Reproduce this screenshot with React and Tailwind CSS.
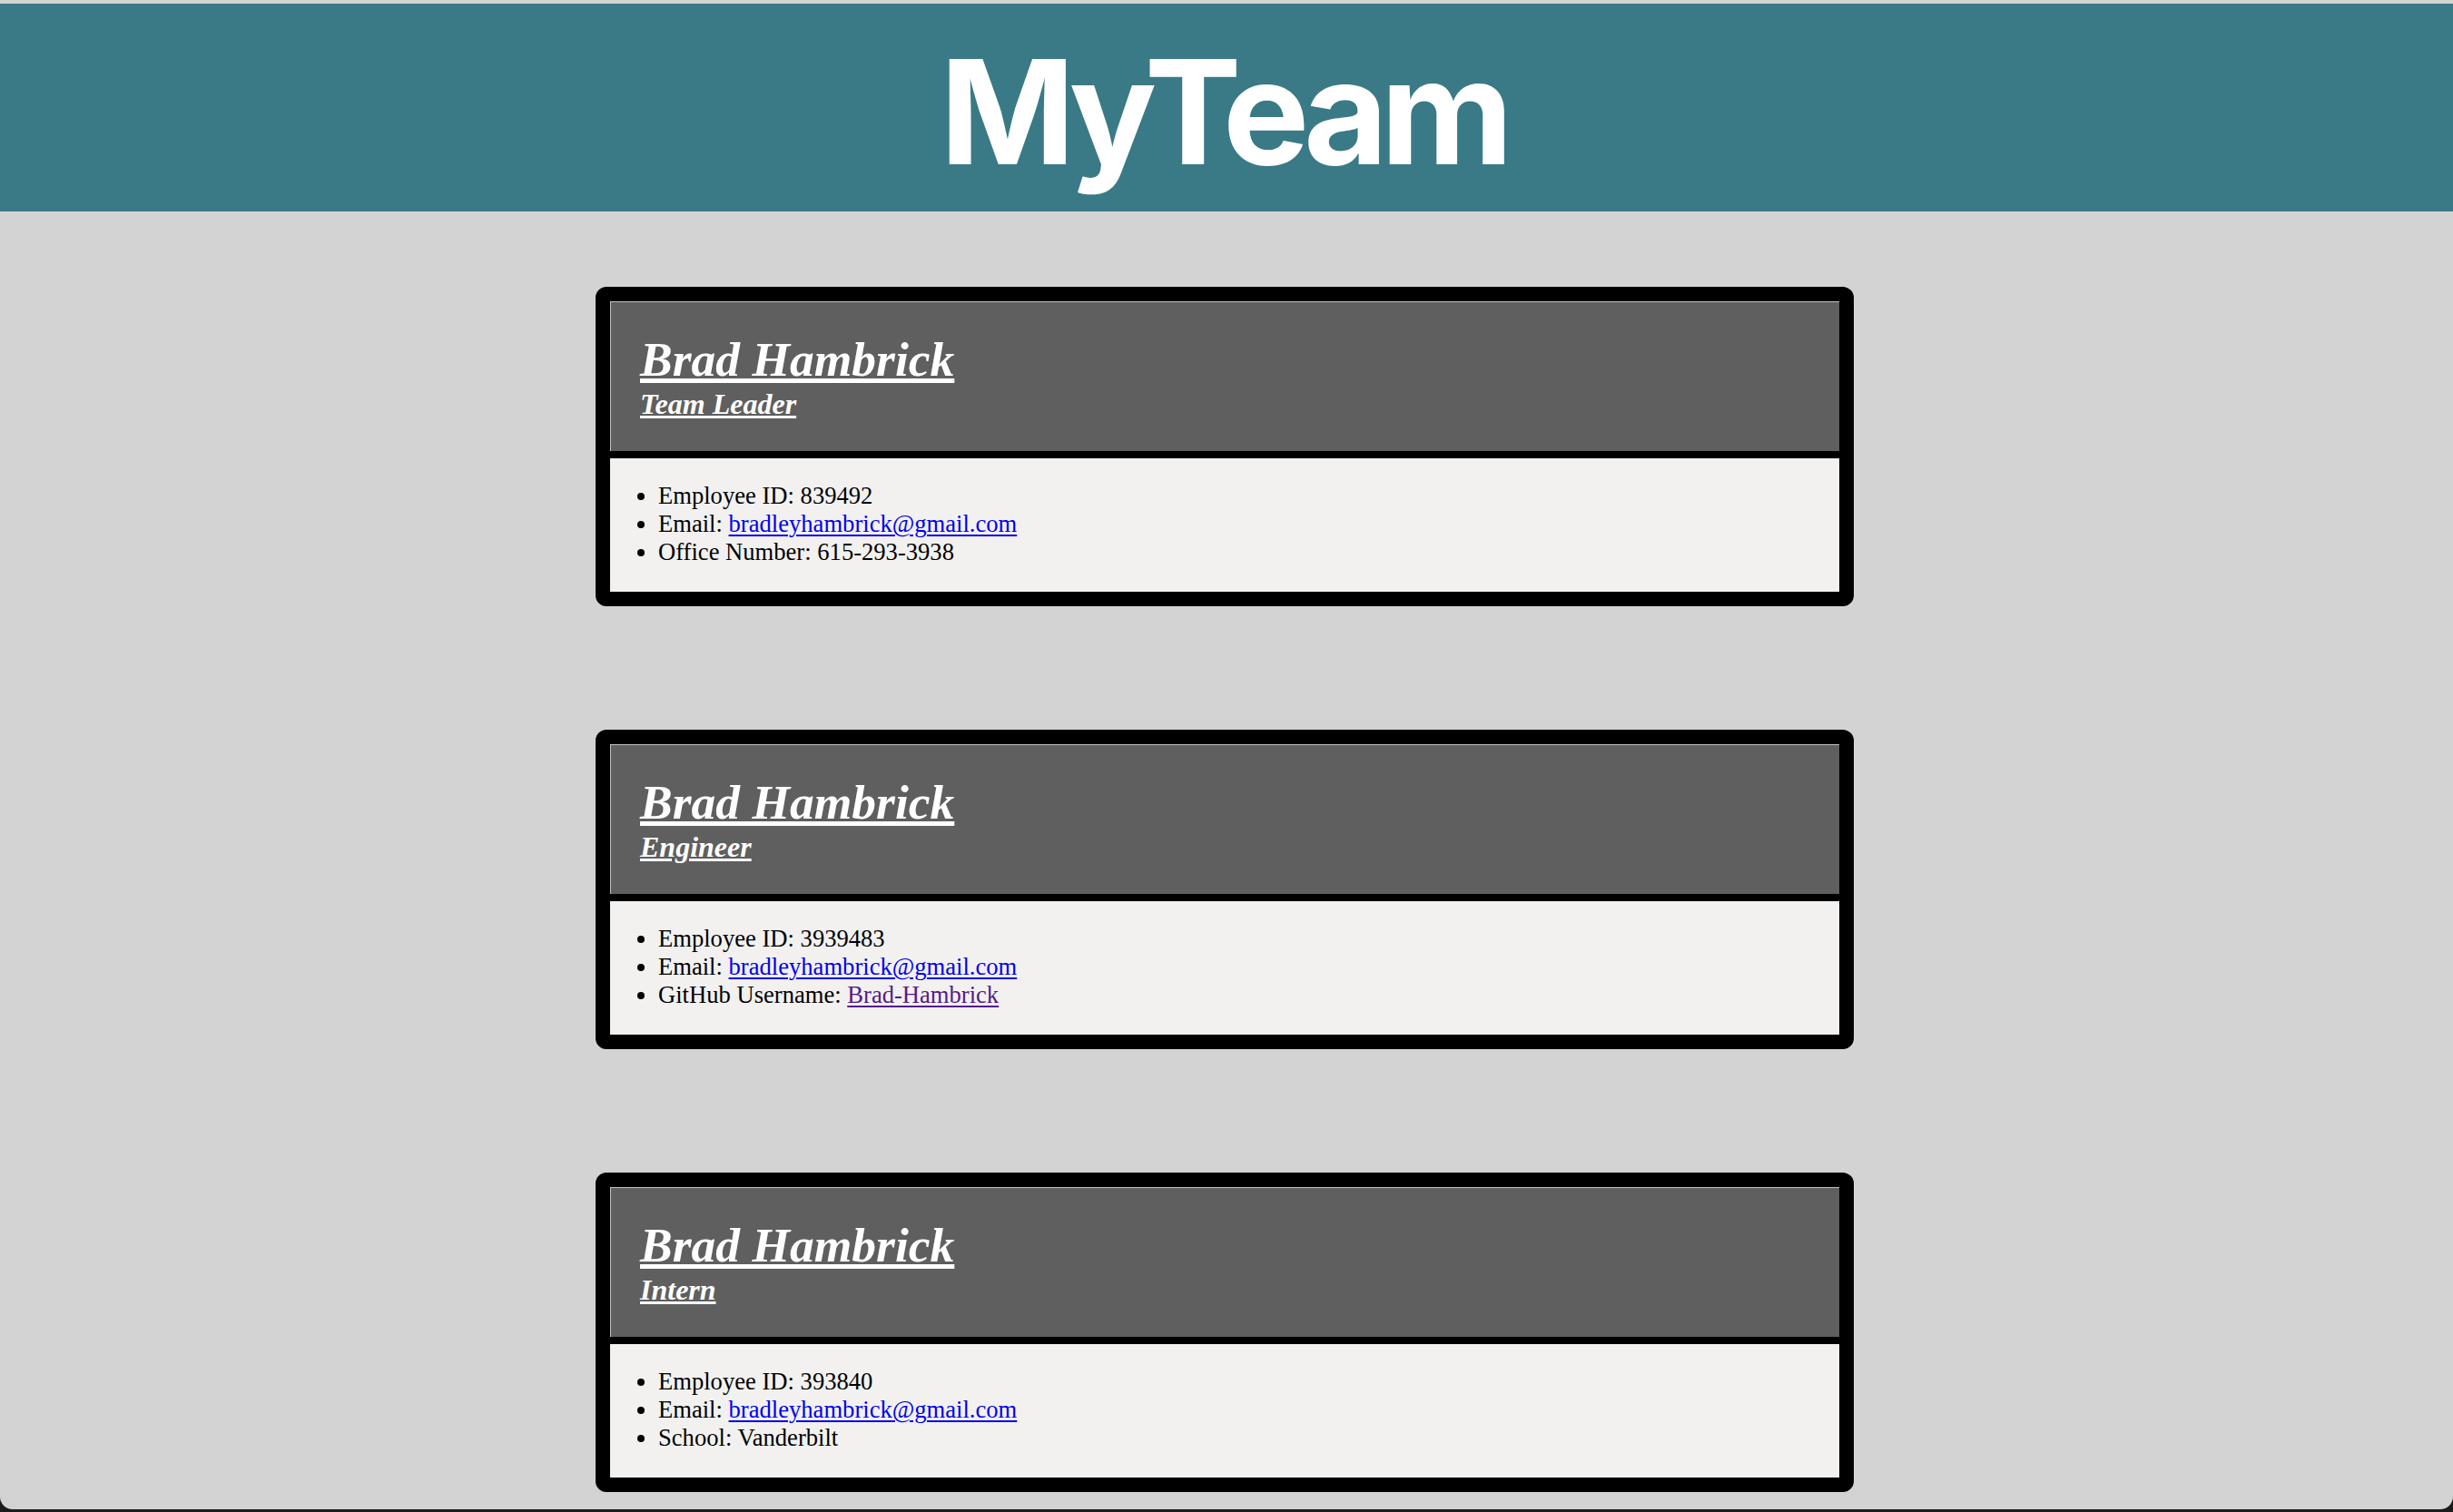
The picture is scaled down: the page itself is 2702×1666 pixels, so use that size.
import React from "react";

const team = [
  {
    name: "Brad Hambrick",
    role: "Team Leader",
    id: "839492",
    email: "bradleyhambrick@gmail.com",
    extra: { label: "Office Number", value: "615-293-3938" },
  },
  {
    name: "Brad Hambrick",
    role: "Engineer",
    id: "3939483",
    email: "bradleyhambrick@gmail.com",
    extra: { label: "GitHub Username", value: "Brad-Hambrick", link: true },
  },
  {
    name: "Brad Hambrick",
    role: "Intern",
    id: "393840",
    email: "bradleyhambrick@gmail.com",
    extra: { label: "School", value: "Vanderbilt" },
  },
];

const EmployeeCard = ({ person }) => (
  <div className="w-[1386px] border-[16px] border-black rounded-[12px] bg-black">
    {/* card header */}
    <div className="bg-[#5f5f5f] border-t border-l border-[#c2c2c2] pl-[32px] pt-[32px] pb-[33px] text-white italic font-bold underline">
      <h2 className="text-[53.5px] leading-[62px] decoration-[4px] underline-offset-[6px]">
        {person.name}
      </h2>
      <h3 className="text-[32px] leading-[37px] decoration-[3px] underline-offset-[4px]">
        {person.role}
      </h3>
    </div>
    <div className="h-[8px] bg-black" />
    {/* card body */}
    <div className="bg-[#f2f1f0] pt-[26px] pb-[28px]">
      <ul className="list-disc pl-[53px] text-[26.6px] leading-[31px] text-black">
        <li>Employee ID: {person.id}</li>
        <li>
          Email:{" "}
          <a href="#" className="text-[#0000ee] underline decoration-[2px] underline-offset-[3px]">
            {person.email}
          </a>
        </li>
        <li>
          {person.extra.label}:{" "}
          {person.extra.link ? (
            <a href="#" className="text-[#551a8b] underline decoration-[2px] underline-offset-[3px]">
              {person.extra.value}
            </a>
          ) : (
            person.extra.value
          )}
        </li>
      </ul>
    </div>
  </div>
);

export default function App() {
  return (
    <div className="h-[1666px] bg-[#1c1c1c] overflow-hidden" style={{ fontFamily: '"Liberation Serif", serif' }}>
      <div className="h-[1663px] bg-[#d3d3d3] rounded-b-[14px] pt-[4px] overflow-hidden">
        <header className="h-[229px] bg-[#3a7a87] pt-[39px] pr-[8px] text-center">
          <h1 className="font-['Inter',sans-serif] font-bold text-white text-[160px] leading-none tracking-[-8px]">
            MyTeam
          </h1>
        </header>
        <main className="flex flex-col items-center gap-[136px] pt-[83px] pr-[4px]">
          {team.map((person, i) => (
            <EmployeeCard key={i} person={person} />
          ))}
        </main>
      </div>
    </div>
  );
}
